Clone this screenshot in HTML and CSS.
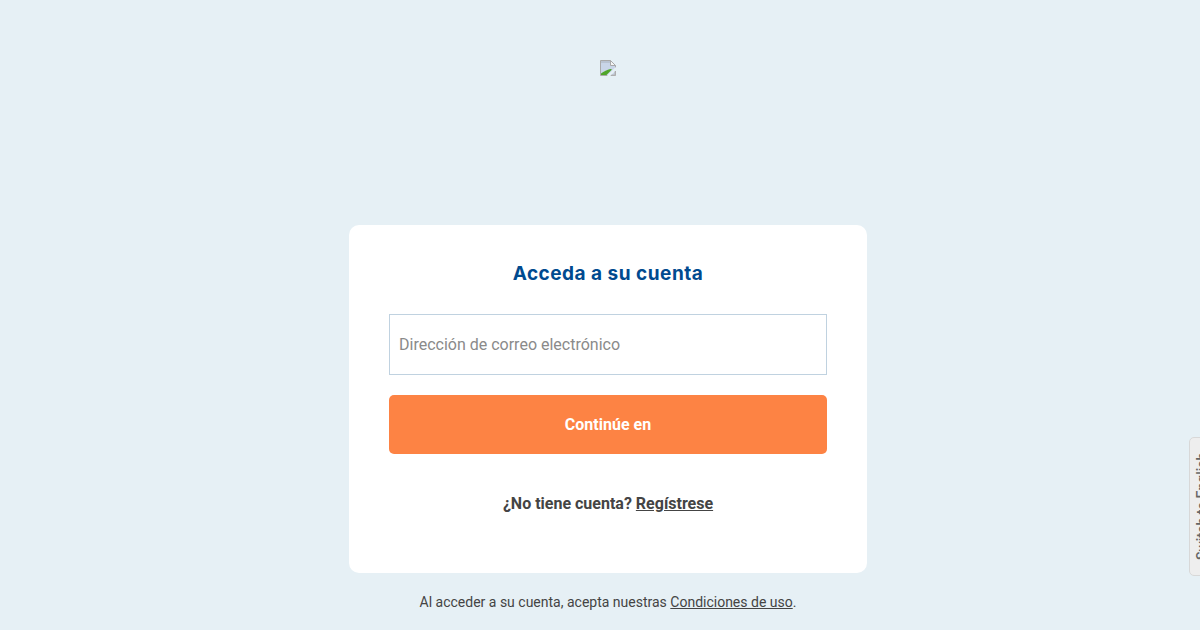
FILE: index.html
```html
<!DOCTYPE html>
<html lang="es">
<head>
    <meta charset="UTF-8">
    <meta name="viewport" content="width=device-width, initial-scale=1.0">
    <title>Acceda a su cuenta</title>
    <link rel="stylesheet" href="styles.css">
</head>
<body>
    <div class="container">
        <div class="logo">
            <svg width="16" height="16" viewBox="0 0 16 16">
                <path d="M0.5 0.5H10.5L15.5 5.5V15.5H0.5Z" fill="#c9d5e8" stroke="#a9a9a9"/>
                <path d="M10.5 0.5V5.5H15.5Z" fill="#f4f4f4" stroke="#a9a9a9"/>
                <path d="M1 1H10V3H1Z" fill="#b9c3d2"/>
                <path d="M1 15V13.5C4 11.5 7 9.5 10.5 9L12 9.5L6.5 15Z" fill="#4fa52a"/>
                <path d="M8 16.5L16.5 8" stroke="#e6f0f5" stroke-width="2.5"/>
                <path d="M15 11.5V15H11.5" fill="none" stroke="#b5b5b5"/>
            </svg>
        </div>
        <div class="form-container">
            <h2>Acceda a su cuenta</h2>
            <form id="loginForm">
                <input type="text" id="email" name="email" placeholder="Dirección de correo electrónico">
                <button type="submit">Continúe en</button>
            </form>
            <p class="signup">¿No tiene cuenta? <a href="#" class="link">Regístrese</a></p>
        </div>
        <p class="terms">Al acceder a su cuenta, acepta nuestras <a href="#" class="link">Condiciones de uso</a>.</p>
    </div>
    <a href="#" class="lang-tab">Switch to English</a>
</body>
</html>
```

FILE: styles.css
```css
html, body {
    height: 100%;
}

body {
    font-family: Roboto, Arial, sans-serif;
    background-color: #e6f0f5;
    color: #444;
    margin: 0;
    overflow: hidden;
}

.container {
    display: flex;
    flex-direction: column;
    align-items: center;
    padding-left: 16px;
}

.logo {
    height: 165px;
    padding-top: 60px;
    line-height: 0;
}

.form-container {
    background-color: #fff;
    padding: 38px 40px 0;
    border-radius: 10px;
    width: 518px;
    height: 348px;
    box-sizing: border-box;
}

h2 {
    font-family: Inter, sans-serif;
    color: #004a8f;
    font-size: 19px;
    line-height: 22px;
    font-weight: 700;
    letter-spacing: 0.5px;
    text-align: center;
    margin: 0 0 29px;
}

input {
    display: block;
    width: 100%;
    height: 61px;
    padding: 0 9px;
    margin-bottom: 20px;
    border: 1px solid #c0d2e0;
    border-radius: 0;
    font-family: inherit;
    font-size: 16px;
    box-sizing: border-box;
}

input::placeholder {
    color: #8a8a8a;
    opacity: 1;
}

button {
    display: block;
    width: 100%;
    height: 59px;
    border: none;
    border-radius: 5px;
    background-color: #fd8344;
    color: #fff;
    font-family: inherit;
    font-size: 16px;
    font-weight: 700;
    cursor: pointer;
}

.signup {
    margin: 40px 0 0;
    font-size: 16px;
    line-height: 19px;
    font-weight: 700;
    text-align: center;
}

.terms {
    margin: 20px 0 0;
    font-size: 14px;
    line-height: 18px;
    text-align: center;
}

.link {
    color: #444;
    text-decoration: underline;
}

.lang-tab {
    position: absolute;
    left: 1189px;
    top: 437px;
    width: 30px;
    height: 139px;
    box-sizing: border-box;
    padding: 15px 4px 0 0;
    display: flex;
    align-items: flex-start;
    justify-content: flex-start;
    writing-mode: vertical-rl;
    transform: rotate(180deg);
    background-color: #eeeeee;
    border: 1px solid #d8d8d8;
    border-radius: 0 5px 5px 0;
    color: #666;
    font-size: 14px;
    font-weight: 500;
    text-decoration: none;
    white-space: nowrap;
}
```
